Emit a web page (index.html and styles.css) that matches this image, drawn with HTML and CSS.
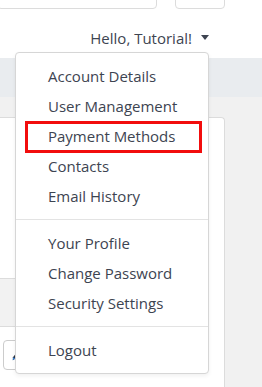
FILE: index.html
```html
<!DOCTYPE html>
<html lang="en">
<head>
  <meta charset="UTF-8">
  <meta name="viewport" content="width=device-width, initial-scale=1.0">
  <title>Account Menu</title>
  <link rel="stylesheet" href="styles.css">
</head>
<body>
  <!-- Header -->
  <header class="header">
    <div class="top-row">
      <div class="search-box"></div>
      <div class="top-button"></div>
    </div>
    <div class="greeting">
      <span class="greeting-text">Hello, Tutorial!</span>
      <span class="caret"></span>
    </div>
  </header>

  <!-- Sub navigation -->
  <div class="subnav"></div>

  <!-- Main content -->
  <main class="main">
    <div class="card">
      <div class="card-body"></div>
      <div class="card-band"></div>
      <div class="card-actions">
        <button class="edit-btn" type="button">
          <svg width="10" height="12" viewBox="0 0 10 12">
            <path d="M7 0.5 L9.5 3 L3.5 9.5 L0.8 11.2 L1 8.3 Z" fill="#2f3440"/>
            <path d="M1 8.3 L0.8 11.2 L3.5 9.5 Z" fill="#3a7fd0"/>
          </svg>
        </button>
      </div>
    </div>
  </main>

  <!-- User dropdown -->
  <ul class="dropdown">
    <li class="dropdown-item">Account Details</li>
    <li class="dropdown-item">User Management</li>
    <li class="dropdown-item highlighted">Payment Methods</li>
    <li class="dropdown-item">Contacts</li>
    <li class="dropdown-item">Email History</li>
    <li class="divider"></li>
    <li class="dropdown-item">Your Profile</li>
    <li class="dropdown-item">Change Password</li>
    <li class="dropdown-item">Security Settings</li>
    <li class="divider"></li>
    <li class="dropdown-item">Logout</li>
  </ul>
</body>
</html>
```

FILE: styles.css
```css
/* General Reset */
body {
  font-family: "Open Sans", "Liberation Sans", sans-serif;
  font-size: 15px;
  color: #3d4451;
  margin: 0;
  padding: 0;
  width: 262px;
  height: 387px;
  overflow: hidden;
  position: relative;
  background-color: #ffffff;
}

/* Header */
.header {
  display: flow-root;
  height: 58px;
  background-color: #ffffff;
}

.top-row {
  display: flex;
  gap: 18px;
  margin-top: -21px;
  height: 30px;
}

.search-box {
  width: 160px;
  margin-left: -3px;
  border: 1px solid #dcdcdc;
  border-radius: 4px;
  box-sizing: border-box;
}

.top-button {
  width: 50px;
  border: 1px solid #dcdcdc;
  border-radius: 4px;
  box-sizing: border-box;
}

.greeting {
  display: flex;
  justify-content: flex-end;
  align-items: center;
  gap: 9px;
  margin-top: 19px;
  padding-right: 53px;
  height: 20px;
  line-height: 20px;
}

.caret {
  width: 0;
  height: 0;
  border-left: 4px solid transparent;
  border-right: 4px solid transparent;
  border-top: 5px solid #3d4451;
  margin-top: -1px;
}

/* Sub navigation */
.subnav {
  height: 39px;
  background-color: #e9ecef;
}

/* Main area */
.main {
  background-color: #f1f1f1;
  padding-top: 20px;
  padding-right: 37px;
  height: 270px;
}

.card {
  background-color: #ffffff;
  border: 1px solid #dcdcdc;
  border-left: none;
  border-bottom: none;
  border-radius: 0 4px 0 0;
  height: 100%;
}

.card-body {
  height: 160px;
}

.card-band {
  height: 47px;
  background-color: #f2f2f2;
  border-top: 1px solid #dcdcdc;
  border-bottom: 1px solid #dcdcdc;
  margin-right: 40px;
}

.card-actions {
  padding: 13px 0 0 3px;
}

.edit-btn {
  width: 40px;
  height: 30px;
  border: 1px solid #cccccc;
  border-radius: 4px;
  background-color: #ffffff;
  padding: 0 0 0 8px;
  display: flex;
  align-items: center;
}

/* Dropdown */
.dropdown {
  position: absolute;
  top: 52px;
  left: 15px;
  width: 194px;
  box-sizing: border-box;
  margin: 0;
  padding: 8px 0;
  list-style: none;
  background-color: #ffffff;
  border: 1px solid #d6d6d6;
  border-radius: 4px;
  box-shadow: 0 2px 4px rgba(0, 0, 0, 0.06);
}

.dropdown-item {
  position: relative;
  height: 30px;
  line-height: 30px;
  padding-left: 32px;
  white-space: nowrap;
}

.divider {
  height: 1px;
  margin: 8px 0;
  background-color: #e3e3e3;
}

/* Highlight annotation */
.highlighted::after {
  content: "";
  position: absolute;
  left: 9px;
  right: 6px;
  top: 0;
  bottom: -2px;
  border: 3px solid #f20d0d;
}
```
